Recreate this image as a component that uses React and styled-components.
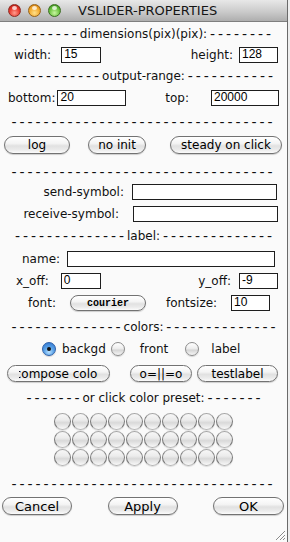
import React from 'react';
import styled, { createGlobalStyle } from 'styled-components';

const Global = createGlobalStyle`
  html, body { margin: 0; padding: 0; background: #eeeeee; }
  body {
    width: 290px; height: 542px; overflow: hidden;
    font-family: "DejaVu Sans", "Noto Sans", sans-serif;
    color: #111;
  }
`;

const Window = styled.div`
  position: relative;
  width: 288px;
  height: 542px;
  box-sizing: border-box;
  background: #fafafa;
  border-right: 1px solid #6a6a6a;
  display: flex;
  flex-direction: column;
`;

const TitleBar = styled.div`
  flex: none;
  height: 22px;
  box-sizing: border-box;
  background: linear-gradient(#e8e8e8, #cbcbcb 55%, #aeaeae);
  border-bottom: 1px solid #7f7f7f;
  display: flex;
  align-items: center;
  padding-left: 8px;
`;

const Light = styled.span`
  flex: none;
  width: 13px;
  height: 13px;
  border-radius: 50%;
  margin-left: ${p => p.$ml}px;
  box-sizing: border-box;
  border: 1px solid ${p => p.$edge};
  background: radial-gradient(circle at 50% 72%, ${p => p.$glow} 0%, ${p => p.$base} 55%, ${p => p.$dark} 100%);
  position: relative;
  &::after {
    content: "";
    position: absolute;
    left: 3px; top: 1px;
    width: 5px; height: 4px;
    border-radius: 50%;
    background: rgba(255,255,255,0.75);
  }
`;

const Title = styled.span`
  margin-left: 17px;
  font-size: 13px;
  color: #151515;
  white-space: nowrap;
`;

const Body = styled.div`
  flex: 1;
  display: flex;
  flex-direction: column;
`;

const RuleLine = styled.div`
  height: 16px;
  line-height: 16px;
  margin-top: ${p => p.$mt}px;
  display: flex;
  justify-content: center;
  white-space: nowrap;
  font-size: 12px;
`;

const Dashes = styled.span`
  font-size: 14px;
  letter-spacing: 2.95px;
  margin-left: ${p => (p.$after ? 2.95 : 0)}px;
  margin-right: ${p => (p.$after ? -2.95 : 0)}px;
`;

const Row = styled.div`
  flex: none;
  display: flex;
  align-items: center;
  height: ${p => p.$h || 16}px;
  margin-top: ${p => p.$mt}px;
  padding-left: ${p => p.$pl || 0}px;
  padding-right: ${p => p.$pr || 0}px;
  justify-content: ${p => p.$justify || 'flex-start'};
`;

const Field = styled.div`
  display: flex;
  align-items: center;
  gap: ${p => p.$gap}px;
  margin-left: ${p => p.$ml || 0}px;
`;

const Label = styled.span`
  font-size: 12px;
  white-space: nowrap;
  color: #111;
`;

const Entry = styled.input`
  flex: none;
  width: ${p => p.$w}px;
  height: 16px;
  box-sizing: border-box;
  margin: 0;
  padding: 0 2px 2px;
  border: 1px solid #1e1e1e;
  border-radius: 0;
  background: #fff;
  font: 12px/13px "Liberation Sans", Arial, sans-serif;
  color: #000;
  outline: none;
`;

const Button = styled.button`
  flex: none;
  width: ${p => p.$w}px;
  height: ${p => p.$h || 17}px;
  margin: 0 0 0 ${p => p.$ml || 0}px;
  padding: 0;
  box-sizing: border-box;
  border: 1px solid #727272;
  border-radius: 9px;
  background: linear-gradient(#ffffff 0%, #f4f4f4 40%, #e1e1e1 56%, #ebebeb 80%, #fbfbfb 100%);
  box-shadow: 0 1px 1px rgba(0, 0, 0, 0.18);
  display: flex;
  align-items: center;
  justify-content: center;
  overflow: hidden;
  font-family: ${p => (p.$mono ? '"Liberation Mono", "Courier New", monospace' : '"DejaVu Sans", sans-serif')};
  font-weight: ${p => (p.$mono ? 700 : 400)};
  font-size: ${p => p.$fs || 12}px;
  color: #000;
  white-space: nowrap;
`;

const Clip = styled.span`
  width: ${p => p.$w}px;
  display: flex;
  justify-content: center;
  overflow: hidden;
`;

const Option = styled.div`
  display: flex;
  align-items: center;
  gap: ${p => p.$gap}px;
  margin-left: ${p => p.$ml || 0}px;
`;

const Radio = styled.span`
  flex: none;
  width: 14px;
  height: 14px;
  border-radius: 50%;
  box-sizing: border-box;
  position: relative;
  border: 1px solid ${p => (p.$on ? '#2c5fa8' : '#8c8c8c')};
  background: ${p =>
    p.$on
      ? 'radial-gradient(circle at 50% 75%, #b9e1ff 0%, #5aa2e8 45%, #2a6fcb 100%)'
      : 'linear-gradient(#ffffff, #eeeeee 45%, #d6d6d6 60%, #f6f6f6)'};
  box-shadow: 0 1px 1px rgba(0, 0, 0, 0.15);
  &::after {
    content: "";
    display: ${p => (p.$on ? 'block' : 'none')};
    position: absolute;
    left: 4px; top: 4px;
    width: 4px; height: 4px;
    border-radius: 50%;
    background: #111;
  }
`;

const PresetGrid = styled.div`
  margin-top: ${p => p.$mt}px;
  display: grid;
  grid-template-columns: repeat(10, 18px);
  grid-auto-rows: 18px;
  justify-content: center;
`;

const Swatch = styled.span`
  width: 17px;
  height: 17px;
  box-sizing: border-box;
  border-radius: 50%;
  border: 1px solid #7a7a7a;
  border-top-color: #a8a8a8;
  border-bottom-color: #b4b4b4;
  background: linear-gradient(#f7f7f7, #ececec 40%, #d9d9d9 58%, #ededed 85%, #f9f9f9);
  box-shadow: 0 1px 1px rgba(0, 0, 0, 0.12);
`;

const Grip = styled.svg`
  position: absolute;
  right: 1px;
  bottom: 1px;
`;

const Rule = ({ mt, left, label, right }) => (
  <RuleLine $mt={mt}>
    <Dashes>{'-'.repeat(left)}</Dashes>
    {label && <span>{label}</span>}
    {label && <Dashes $after>{'-'.repeat(right)}</Dashes>}
  </RuleLine>
);

export default function App() {
  return (
    <>
      <Global />
      <Window>
        <TitleBar>
          <Light $ml={0} $edge="#8e2a22" $glow="#ff9d8f" $base="#e8372a" $dark="#a3170f" />
          <Light $ml={7} $edge="#976217" $glow="#ffe08a" $base="#f3a92c" $dark="#c26e06" />
          <Light $ml={7} $edge="#3a6e20" $glow="#c9f5a1" $base="#69c23c" $dark="#307f17" />
          <Title>VSLIDER-PROPERTIES</Title>
        </TitleBar>
        <Body>
          <Rule mt={4} left={8} label="dimensions(pix)(pix):" right={8} />
          <Row $mt={5} $pl={14} $pr={9} $justify="space-between">
            <Field $gap={10}>
              <Label>width:</Label>
              <Entry $w={40} defaultValue="15" readOnly />
            </Field>
            <Field $gap={6}>
              <Label>height:</Label>
              <Entry $w={39} defaultValue="128" readOnly />
            </Field>
          </Row>
          <Rule mt={5} left={11} label="output-range:" right={11} />
          <Row $mt={6} $pl={8} $pr={8} $justify="space-between">
            <Field $gap={2}>
              <Label>bottom:</Label>
              <Entry $w={69} defaultValue="20" readOnly />
            </Field>
            <Field $gap={22}>
              <Label>top:</Label>
              <Entry $w={68} defaultValue="20000" readOnly />
            </Field>
          </Row>
          <Rule mt={8} left={33} />
          <Row $mt={6} $h={18} $pl={4}>
            <Button $w={66} $h={18}>log</Button>
            <Button $w={58} $h={18} $ml={18}>no init</Button>
            <Button $w={112} $h={18} $ml={24}>steady on click</Button>
          </Row>
          <Rule mt={10} left={33} />
          <Row $mt={4} $pr={10} $justify="flex-end">
            <Field $gap={8}>
              <Label>send-symbol:</Label>
              <Entry $w={145} defaultValue="" readOnly />
            </Field>
          </Row>
          <Row $mt={6} $pr={9} $justify="flex-end">
            <Field $gap={14}>
              <Label>receive-symbol:</Label>
              <Entry $w={145} defaultValue="" readOnly />
            </Field>
          </Row>
          <Rule mt={6} left={14} label="label:" right={14} />
          <Row $mt={7} $pl={22}>
            <Field $gap={7}>
              <Label>name:</Label>
              <Entry $w={208} defaultValue="" readOnly />
            </Field>
          </Row>
          <Row $mt={6} $pl={16} $pr={9} $justify="space-between">
            <Field $gap={12}>
              <Label>x_off:</Label>
              <Entry $w={40} defaultValue="0" readOnly />
            </Field>
            <Field $gap={8}>
              <Label>y_off:</Label>
              <Entry $w={39} defaultValue="-9" readOnly />
            </Field>
          </Row>
          <Row $mt={6} $pl={28}>
            <Label>font:</Label>
            <Button $w={76} $h={16} $ml={14} $mono $fs={10}>courier</Button>
            <Field $gap={14} $ml={20}>
              <Label>fontsize:</Label>
              <Entry $w={39} defaultValue="10" readOnly />
            </Field>
          </Row>
          <Rule mt={8} left={14} label="colors:" right={14} />
          <Row $mt={6} $pl={42}>
            <Option $gap={6}>
              <Radio $on />
              <Label>backgd</Label>
            </Option>
            <Option $gap={15} $ml={5}>
              <Radio />
              <Label>front</Label>
            </Option>
            <Option $gap={12} $ml={17}>
              <Radio />
              <Label>label</Label>
            </Option>
          </Row>
          <Row $mt={8} $h={17} $pl={7}>
            <Button $w={103} $h={17}>
              <Clip $w={79}>compose color</Clip>
            </Button>
            <Button $w={62} $h={17} $ml={20}>o=||=o</Button>
            <Button $w={81} $h={17} $ml={5}>testlabel</Button>
          </Row>
          <Rule mt={8} left={7} label="or click color preset:" right={7} />
          <PresetGrid $mt={7}>
            {Array.from({ length: 30 }, (_, i) => (
              <Swatch key={i} />
            ))}
          </PresetGrid>
          <Rule mt={9} left={33} />
          <Row $mt={5} $h={18} $pl={2} $pr={3} $justify="space-between">
            <Button $w={70} $h={18} $fs={13}>Cancel</Button>
            <Button $w={70} $h={18} $fs={13}>Apply</Button>
            <Button $w={71} $h={18} $fs={13}>OK</Button>
          </Row>
        </Body>
        <Grip width="12" height="12" viewBox="0 0 12 12">
          <path d="M11 2 L2 11 M11 6 L6 11 M11 9 L9 11" stroke="#8a8a8a" strokeWidth="1" fill="none" />
          <path d="M11 3 L3 11 M11 7 L7 11" stroke="#ffffff" strokeWidth="1" fill="none" />
        </Grip>
      </Window>
    </>
  );
}
